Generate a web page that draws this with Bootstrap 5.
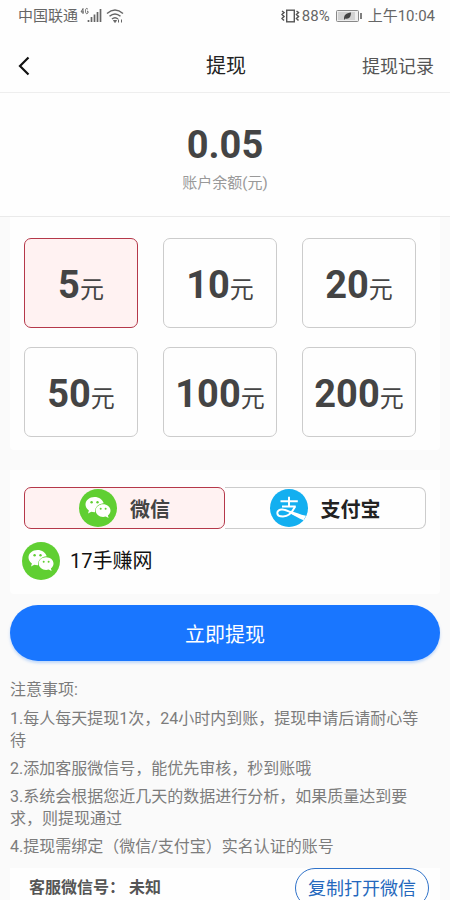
<!DOCTYPE html>
<html lang="zh-CN">
<head>
<meta charset="utf-8">
<meta name="viewport" content="width=device-width, initial-scale=1">
<title>提现</title>
<link href="https://cdn.jsdelivr.net/npm/bootstrap@5.3.0/dist/css/bootstrap.min.css" rel="stylesheet">
<style>
body{font-family:Roboto,"Noto Sans CJK SC",sans-serif;background:#fafafa;color:#444}
.status-bar{height:32px;padding:0 15px 0 18px;font-size:15px;line-height:32px;color:#666;background:#fefefe}
.status-icons{gap:2px}
.title-bar{height:61px;padding:8px 16px 0 18px;background:#fefefe;border-bottom:1px solid #eee;box-shadow:0 1px 2px #0000000d}
.title-bar h1{font-size:20px;line-height:30px;color:#222}
.back-btn{width:14px;height:30px}
.history-link{font-size:18px;color:#555}
.balance{height:124px;padding-top:29px;background:#fefefe;border-bottom:1px solid #eaeaea}
.big-num{font-size:38px;line-height:46px;font-weight:700;color:#444}
.balance-label{font-size:15px;line-height:22px;padding-top:4px;color:#999}
.page-form{padding:0 10px}
.panel{background:#fefefe;border-radius:0 0 4px 4px}
.amount-grid{display:grid;grid-template-columns:repeat(3,1fr);gap:19px 25px;padding:21px 24px 13px 14px}
.option{border:1px solid #ccc;cursor:pointer}
.amount{height:90px;padding-top:8px;border-radius:7px}
.unit{font-size:24px;line-height:46px;color:#444}
.btn-check:checked+.option{border-color:#b5384a;background:#fff2f2}
.pay-panel{margin-top:20px;padding:17px 14px 14px}
.pay{height:42px;gap:13px;font-size:20px;font-weight:700;color:#222}
.pay span{padding-top:3px}
.pay-wx{border-radius:7px;color:#444}
.pay-ali{border-radius:0 7px 7px 0;border-left:0}
.account{margin:13px 0 0 -2px;gap:10px;font-size:20px;color:#111}
.submit-btn{height:56px;margin-top:11px;padding-top:9px;font-size:20px;background:#1976ff;color:#fff;box-shadow:0 2px 3px #0d6efd40}
.submit-btn:hover{background:#1268e8;color:#fff}
.notes{padding:18px 18px 0 10px;font-size:16px;line-height:22px;color:#7c7c7c}
.notes p{margin-bottom:7px}
.notes ol{margin-bottom:10px}
.notes li{margin-bottom:6px}
.service{margin:0 10px;padding:0 11px 0 19px;font-size:16px;color:#555}
.copy-btn{height:40px;padding:0 12px;border:1px solid #2f72c9;font-size:18px;color:#2468bd}
</style>
<script src="https://cdn.jsdelivr.net/npm/bootstrap@5.3.0/dist/js/bootstrap.bundle.min.js"></script>
</head>
<body>
<svg class="d-none" aria-hidden="true">
  <symbol id="wechat" viewBox="0 0 38 38">
    <circle cx="19" cy="19" r="19" fill="#60cf32"/>
    <path fill="#fff" d="M15.500 8C10.500 8 6.500 11.300 6.500 15.600c0 2.400 1.300 4.500 3.400 5.900L9 24.500l3.300-1.700c1 .3 2.100.4 3.200.4h.6C15.600 18.500 19.500 14.600 24.700 14.300 23.700 10.600 20 8 15.500 8z"/>
    <path fill="#fff" d="M31.500 21.600c0-3.500-3.300-6.300-7.400-6.300s-7.400 2.800-7.400 6.300 3.300 6.400 7.400 6.400c.9 0 1.800-.1 2.600-.4l2.900 1.500-.7-2.600c1.600-1.200 2.600-3 2.600-4.900z"/>
    <g fill="#60cf32"><circle cx="12.600" cy="13.200" r="1.200"/><circle cx="18.500" cy="13.200" r="1.200"/><circle cx="21.700" cy="19.700" r="1"/><circle cx="26.600" cy="19.700" r="1"/></g>
  </symbol>
  <symbol id="alipay" viewBox="0 0 38 38">
    <circle cx="19" cy="19" r="19" fill="#13aff0"/>
    <g fill="none" stroke="#fff"><path stroke-width="2" d="M10.500 12.300h17.300M12 17.400h13.700M19 7.800v9.600"/>
    <path stroke-width="2" d="M25 17.400c-2.200 5-6.500 10-12 10-3.800 0-5.700-1.500-5.700-3.500 0-2.200 2.300-3.500 5-3.300 4.400.3 8 2.600 12.700 4.900"/></g>
    <path fill="#fff" d="M20 21.800c5 1.600 10 3.700 16 5l-2.500 4.400C28 29 23.500 26 19.500 24z"/>
  </symbol>
</svg>

<div class="status-bar d-flex justify-content-between">
  <div class="status-icons d-flex align-items-center">
    <span>中国联通</span>
    <svg width="24" height="18" viewBox="0 0 24 18" role="img" aria-label="4G">
      <path d="M3 1.500 1 5h3M3 1.500V7M8 2.300C6 .5 5.500 2 5.500 4s.5 3.500 2.500 2V4.300H7" fill="none" stroke="#666"/>
      <path d="M8.500 13v2M11.500 10v5M14.500 7.500V15M17.500 5v10M20.500 2v13" stroke="#666" stroke-width="1.700"/>
    </svg>
    <svg width="18" height="16" viewBox="0 0 18 16" role="img" aria-label="Wi-Fi">
      <path d="M1 5.500q8-7 16 0M3.500 8.300q5.500-4.700 11 0M6 11q3-2.600 6 0" fill="none" stroke="#666" stroke-width="1.500"/>
      <path d="M7.500 12.500h3L9 14.500zM12.500 11.500v3M15.500 11.500v3" fill="#666" stroke="#666"/>
    </svg>
  </div>
  <div class="status-icons d-flex align-items-center">
    <svg width="19" height="16" viewBox="0 0 19 16" role="img" aria-label="振动">
      <rect x="5.700" y="2.200" width="7.600" height="11.600" fill="none" stroke="#555" stroke-width="1.400"/>
      <path d="M1 3l2 1.500L1 6.500l2 2-2 2 2 2M15.500 3l2 1.500-2 2 2 2-2 2 2 2" fill="none" stroke="#555" stroke-width="1.500"/>
    </svg>
    <span>88%</span>
    <svg class="mx-1" width="26" height="13" viewBox="0 0 26 13" role="img" aria-label="电池">
      <rect x=".5" y=".5" width="22" height="11" rx="1" fill="#eee" stroke="#888"/>
      <path d="M2 2h17v8H2z" fill="#d2d2d2"/>
      <path d="M8 9c0-4 2-6 7-6.500C15 7 13 9.500 9.500 8.500L8 10z" fill="#444"/>
      <path d="M25 3v6" stroke="#555" stroke-width="1.500"/>
    </svg>
    <span>上午10:04</span>
  </div>
</div>

<header class="title-bar row g-0 align-items-center">
  <div class="col d-flex">
    <button class="back-btn btn p-0 border-0 d-flex align-items-center" type="button" aria-label="返回">
      <svg width="12" height="20" viewBox="0 0 12 20"><path d="M10.500 1.500 2 10l8.500 8.500" fill="none" stroke="#111" stroke-width="2.200"/></svg>
    </button>
  </div>
  <h1 class="col-auto mb-0 fw-normal">提现</h1>
  <div class="col text-end"><a class="history-link text-decoration-none" href="#">提现记录</a></div>
</header>

<main>
  <section class="balance text-center">
    <div class="big-num">0.05</div>
    <div class="balance-label">账户余额(元)</div>
  </section>

  <form class="page-form">
    <div class="panel amount-grid">
      <div><input class="btn-check" type="radio" name="amount" id="a5" checked><label class="option amount d-flex justify-content-center align-items-center" for="a5"><span><span class="big-num">5</span><span class="unit">元</span></span></label></div>
      <div><input class="btn-check" type="radio" name="amount" id="a10"><label class="option amount d-flex justify-content-center align-items-center" for="a10"><span><span class="big-num">10</span><span class="unit">元</span></span></label></div>
      <div><input class="btn-check" type="radio" name="amount" id="a20"><label class="option amount d-flex justify-content-center align-items-center" for="a20"><span><span class="big-num">20</span><span class="unit">元</span></span></label></div>
      <div><input class="btn-check" type="radio" name="amount" id="a50"><label class="option amount d-flex justify-content-center align-items-center" for="a50"><span><span class="big-num">50</span><span class="unit">元</span></span></label></div>
      <div><input class="btn-check" type="radio" name="amount" id="a100"><label class="option amount d-flex justify-content-center align-items-center" for="a100"><span><span class="big-num">100</span><span class="unit">元</span></span></label></div>
      <div><input class="btn-check" type="radio" name="amount" id="a200"><label class="option amount d-flex justify-content-center align-items-center" for="a200"><span><span class="big-num">200</span><span class="unit">元</span></span></label></div>
    </div>

    <div class="panel pay-panel">
      <div class="row g-0">
        <div class="col"><input class="btn-check" type="radio" name="pay" id="wx" checked><label class="option pay pay-wx d-flex justify-content-center align-items-center" for="wx"><svg width="38" height="38"><use href="#wechat"/></svg><span>微信</span></label></div>
        <div class="col"><input class="btn-check" type="radio" name="pay" id="ali"><label class="option pay pay-ali d-flex justify-content-center align-items-center" for="ali"><svg width="38" height="38"><use href="#alipay"/></svg><span>支付宝</span></label></div>
      </div>
      <div class="account d-flex align-items-center"><svg width="38" height="38"><use href="#wechat"/></svg>17手赚网</div>
    </div>

    <button class="submit-btn btn w-100 rounded-pill border-0" type="submit">立即提现</button>
  </form>

  <section class="notes">
    <p>注意事项:</p>
    <ol class="list-unstyled">
      <li>1.每人每天提现1次，24小时内到账，提现申请后请耐心等待</li>
      <li>2.添加客服微信号，能优先审核，秒到账哦</li>
      <li>3.系统会根据您近几天的数据进行分析，如果质量达到要求，则提现通过</li>
      <li>4.提现需绑定（微信/支付宝）实名认证的账号</li>
    </ol>
  </section>

  <section class="panel service d-flex justify-content-between align-items-center">
    <strong>客服微信号： 未知</strong>
    <button class="copy-btn btn rounded-pill" type="button">复制打开微信</button>
  </section>
</main>
</body>
</html>
